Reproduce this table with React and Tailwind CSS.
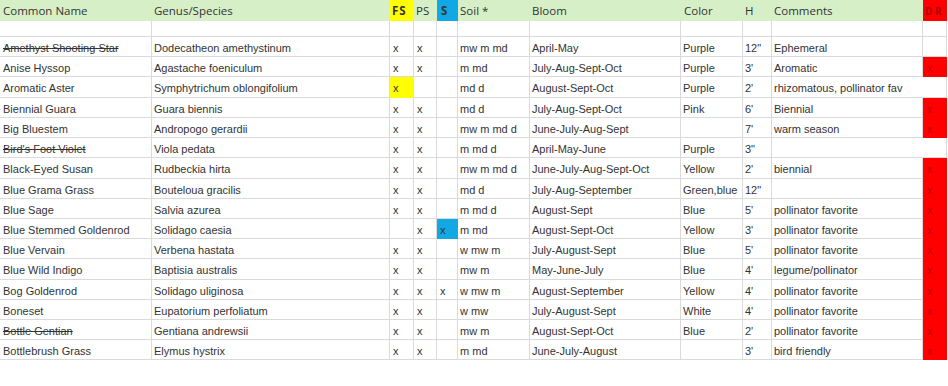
const cols = [
  { key: "name", w: "w-[152px]" },
  { key: "genus", w: "w-[238px]" },
  { key: "fs", w: "w-[24px]" },
  { key: "ps", w: "w-[23px]" },
  { key: "s", w: "w-[21px]" },
  { key: "soil", w: "w-[72px]" },
  { key: "bloom", w: "w-[151px]" },
  { key: "color", w: "w-[62px]" },
  { key: "h", w: "w-[29px]" },
  { key: "comments", w: "w-[151px]" },
  { key: "dr", w: "w-[24px]" },
]

const rows = [
  { name: "Amethyst Shooting Star", strike: true, genus: "Dodecatheon amethystinum", fs: "x", ps: "x", s: "", soil: "mw m md", bloom: "April-May", color: "Purple", h: '12"', comments: "Ephemeral", dr: false },
  { name: "Anise Hyssop", genus: "Agastache foeniculum", fs: "x", ps: "x", s: "", soil: "m md", bloom: "July-Aug-Sept-Oct", color: "Purple", h: "3'", comments: "Aromatic", dr: true },
  { name: "Aromatic Aster", genus: "Symphytrichum oblongifolium", fs: "x", fsYellow: true, ps: "", s: "", soil: "md d", bloom: "August-Sept-Oct", color: "Purple", h: "2'", comments: "rhizomatous, pollinator fav", dr: false, overflow: true, tall: true },
  { name: "Biennial Guara", genus: "Guara biennis", fs: "x", ps: "x", s: "", soil: "md d", bloom: "July-Aug-Sept-Oct", color: "Pink", h: "6'", comments: "Biennial", dr: true },
  { name: "Big Bluestem", genus: "Andropogo gerardii", fs: "x", ps: "x", s: "", soil: "mw m md d", bloom: "June-July-Aug-Sept", color: "", h: "7'", comments: "warm season", dr: true },
  { name: "Bird's Foot Violet", strike: true, genus: "Viola pedata", fs: "x", ps: "x", s: "", soil: "m md d", bloom: "April-May-June", color: "Purple", h: '3"', comments: "", dr: false, overflow: true },
  { name: "Black-Eyed Susan", genus: "Rudbeckia hirta", fs: "x", ps: "x", s: "", soil: "mw m md d", bloom: "June-July-Aug-Sept-Oct", color: "Yellow", h: "2'", comments: "biennial", dr: true, tall: true },
  { name: "Blue Grama Grass", genus: "Bouteloua gracilis", fs: "x", ps: "x", s: "", soil: "md d", bloom: "July-Aug-September", color: "Green,blue", h: '12"', comments: "", dr: true },
  { name: "Blue Sage", genus: "Salvia azurea", fs: "x", ps: "x", s: "", soil: "m md d", bloom: "August-Sept", color: "Blue", h: "5'", comments: "pollinator favorite", dr: true },
  { name: "Blue Stemmed Goldenrod", genus: "Solidago caesia", fs: "", ps: "x", s: "x", sBlue: true, soil: "m md", bloom: "August-Sept-Oct", color: "Yellow", h: "3'", comments: "pollinator favorite", dr: true },
  { name: "Blue Vervain", genus: "Verbena hastata", fs: "x", ps: "x", s: "", soil: "w mw m", bloom: "July-August-Sept", color: "Blue", h: "5'", comments: "pollinator favorite", dr: true },
  { name: "Blue Wild Indigo", genus: "Baptisia australis", fs: "x", ps: "x", s: "", soil: "mw m", bloom: "May-June-July", color: "Blue", h: "4'", comments: "legume/pollinator", dr: true, tall: true },
  { name: "Bog Goldenrod", genus: "Solidago uliginosa", fs: "x", ps: "x", s: "x", soil: "w mw m", bloom: "August-September", color: "Yellow", h: "4'", comments: "pollinator favorite", dr: true },
  { name: "Boneset", genus: "Eupatorium perfoliatum", fs: "x", ps: "x", s: "", soil: "w mw", bloom: "July-August-Sept", color: "White", h: "4'", comments: "pollinator favorite", dr: true },
  { name: "Bottle Gentian", strike: true, genus: "Gentiana andrewsii", fs: "x", ps: "x", s: "", soil: "mw m", bloom: "August-Sept-Oct", color: "Blue", h: "2'", comments: "pollinator favorite", dr: true },
  { name: "Bottlebrush Grass", genus: "Elymus hystrix", fs: "x", ps: "x", s: "", soil: "m md", bloom: "June-July-August", color: "", h: "3'", comments: "bird friendly", dr: true },
]

const HeaderRow = () => (
  <div className="flex h-[21px] whitespace-nowrap font-['Open_Sans',sans-serif] text-[11.5px] leading-[22px] text-[#333]">
    <div className="w-[152px] bg-[#d7efc7] pl-[3px]">Common Name</div>
    <div className="w-[238px] bg-[#d7efc7] pl-[2px]">Genus/Species</div>
    <div className="w-[24px] bg-[#ffff00] pl-[2px] font-bold tracking-[1px]">FS</div>
    <div className="w-[23px] bg-[#d7efc7] pl-[2px]">PS</div>
    <div className="w-[21px] bg-[#12a8e3] pl-[4px] font-bold">S</div>
    <div className="w-[72px] bg-[#d7efc7] pl-[2px]">Soil *</div>
    <div className="w-[151px] bg-[#d7efc7] pl-[2px]">Bloom</div>
    <div className="w-[62px] bg-[#d7efc7] pl-[3px]">Color</div>
    <div className="w-[29px] bg-[#d7efc7] pl-[2px]">H</div>
    <div className="w-[151px] bg-[#d7efc7] pl-[2px]">Comments</div>
    <div className="w-[24px] overflow-hidden bg-[#ff0000] pl-[2px] text-[10px] font-bold text-[#b00000]">D R</div>
  </div>
)

const EmptyRow = () => (
  <div className="flex h-[16px]">
    {cols.map((c) => (
      <div key={c.key} className={`${c.w} border-r border-b border-[#dadada]`} />
    ))}
  </div>
)

const Cell = ({ w, pad, className = "", children }) => (
  <div className={`${w} ${pad} shrink-0 whitespace-nowrap border-b ${className}`}>{children}</div>
)

const DataRow = ({ r }) => (
  <div className={`flex ${r.tall ? "h-[21px] leading-[23px]" : "h-[20px] leading-[22px]"}`}>
    <Cell w="w-[152px]" pad="pl-[3px]" className="border-r border-[#dadada]">
      <span className={r.strike ? "line-through" : ""}>{r.name}</span>
    </Cell>
    <Cell w="w-[238px]" pad="pl-[2px]" className="border-r border-[#dadada]">{r.genus}</Cell>
    <Cell w="w-[24px]" pad="pl-[3px]" className={r.fsYellow ? "border-r border-[#ffff00] bg-[#ffff00]" : "border-r border-[#dadada]"}>{r.fs}</Cell>
    <Cell w="w-[23px]" pad="pl-[3px]" className="border-r border-[#dadada]">{r.ps}</Cell>
    <Cell w="w-[21px]" pad="pl-[3px]" className={r.sBlue ? "border-r border-[#12a8e3] bg-[#12a8e3]" : "border-r border-[#dadada]"}>{r.s}</Cell>
    <Cell w="w-[72px]" pad="pl-[2px]" className="border-r border-[#dadada]">{r.soil}</Cell>
    <Cell w="w-[151px]" pad="pl-[2px]" className="border-r border-[#dadada]">{r.bloom}</Cell>
    <Cell w="w-[62px]" pad="pl-[2px]" className="border-r border-[#dadada]">{r.color}</Cell>
    <Cell w="w-[29px]" pad="pl-[2px]" className="border-r border-[#dadada]">{r.h}</Cell>
    <Cell
      w="w-[151px]"
      pad="pl-[2px]"
      className={`relative border-[#dadada] ${r.overflow ? "border-r border-r-transparent" : "border-r"}`}
    >
      <span className="relative z-10">{r.comments}</span>
    </Cell>
    {r.dr ? (
      <Cell w="w-[24px]" pad="pl-[4px]" className="border-[#ff0000] bg-[#ff0000] text-[#c80000]">x</Cell>
    ) : (
      <Cell w="w-[24px]" pad="pl-[3px]" className="border-r border-[#dadada]" />
    )}
  </div>
)

export default function App() {
  return (
    <div className="h-[386px] w-[948px] overflow-hidden bg-white">
      <HeaderRow />
      <EmptyRow />
      <div className="font-['Liberation_Sans',Arial,sans-serif] text-[11px] text-[#333]">
        {rows.map((r) => (
          <DataRow key={r.name} r={r} />
        ))}
      </div>
    </div>
  )
}
